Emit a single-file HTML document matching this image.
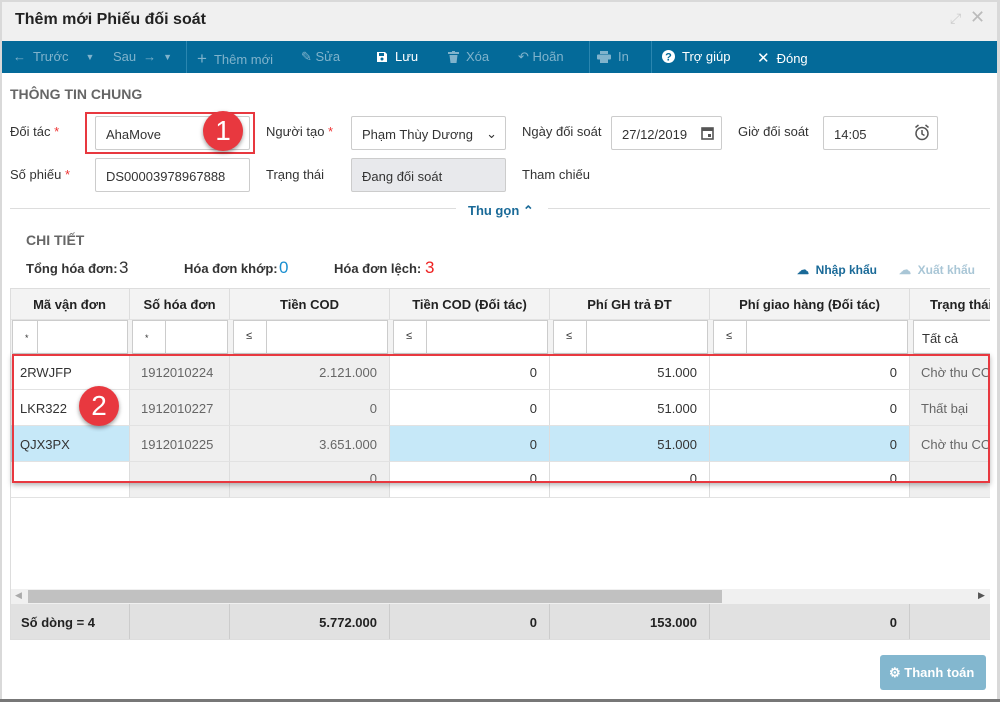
<!DOCTYPE html>
<html><head><meta charset="utf-8"><style>
*{box-sizing:border-box;margin:0;padding:0}
body{width:1000px;height:702px;overflow:hidden;background:#fff;font-family:"Liberation Sans",sans-serif;font-size:13px;color:#333;position:relative}
.a{position:absolute}
.tb{color:#fff;font-size:13px;top:49px;white-space:nowrap;display:flex;align-items:center;gap:7px}
.tb svg{display:block}
.dis{color:#80b3cc}
.lbl{font-size:13px;color:#333}
.inp{position:absolute;border:1px solid #ccc;border-radius:2px;background:#fff;height:34px;font-size:13px;padding:10px 0 0 10px}
.c{position:absolute;border-right:1px solid #ddd;border-bottom:1px solid #e2e2e2;font-size:13px;padding-top:11px;overflow:hidden;white-space:nowrap}
.r{text-align:right;padding-right:12px}
.g{background:#efefef}
.h{font-weight:bold;text-align:center;background:#f3f3f3;color:#222;padding-top:9px}
.sel{background:#c6e8f8}
.f{position:absolute;background:#fff;border:1px solid #ccc;height:34px}
.ft{position:absolute;background:#e1e1e1;border-right:1px solid #ccc;font-weight:bold;font-size:13px;padding-top:11px;color:#222}
.red{position:absolute;border:2px solid #e8383f}
.badge{position:absolute;width:40px;height:40px;border-radius:50%;background:#e8383f;color:#fff;font-size:28px;text-align:center;line-height:40px;box-shadow:0 2px 4px rgba(0,0,0,.4)}
</style></head><body>
<div class="a" style="left:0;top:0;width:1000px;height:702px;background:#d9d9d9"></div>
<div class="a" style="left:2px;top:2px;width:995px;height:697px;background:#fff"></div>
<div class="a" style="left:0;top:699px;width:1000px;height:3px;background:#777"></div>
<div class="a" style="left:2px;top:2px;width:995px;height:39px;background:#f0f0f0"></div>
<div class="a" style="left:15px;top:11px;font-size:16px;font-weight:bold;color:#222">Thêm mới Phiếu đối soát</div>
<div class="a" style="left:950px;top:10px;font-size:14px;color:#ccc">⤢</div>
<div class="a" style="left:970px;top:7px;font-size:18px;color:#bbb">✕</div>
<div class="a" style="left:2px;top:41px;width:995px;height:32px;background:#046a99"></div>
<div class="a" style="left:186px;top:41px;width:1px;height:32px;background:#2b86b0"></div>
<div class="a" style="left:589px;top:41px;width:1px;height:32px;background:#2b86b0"></div>
<div class="a" style="left:651px;top:41px;width:1px;height:32px;background:#2b86b0"></div>
<div class="a tb dis" style="left:13px">← <span>Trước</span><span style="margin-left:10px;font-size:9px">▼</span></div>
<div class="a tb dis" style="left:113px">Sau <span>→</span><span style="font-size:9px">▼</span></div>
<div class="a tb dis" style="left:197px"><span style="font-size:17px">+</span> Thêm mới</div>
<div class="a tb dis" style="left:301px">✎ Sửa</div>
<div class="a tb" style="left:376px"><svg width="12" height="12" viewBox="0 0 12 12"><path d="M1 1h8l2 2v8H1z" fill="#fff"/><rect x="3" y="2" width="5" height="3" fill="#046a99"/><circle cx="6" cy="8" r="1.5" fill="#046a99"/></svg> Lưu</div>
<div class="a tb dis" style="left:448px"><svg width="11" height="12" viewBox="0 0 11 12"><rect x="0" y="1" width="11" height="2" fill="#80b3cc"/><rect x="4" y="0" width="3" height="1.5" fill="#80b3cc"/><path d="M1.5 4h8l-1 8h-6z" fill="#80b3cc"/></svg> Xóa</div>
<div class="a tb dis" style="left:518px">↶ Hoãn</div>
<div class="a tb dis" style="left:597px"><svg width="14" height="12" viewBox="0 0 14 12"><rect x="3" y="0" width="8" height="3" fill="#80b3cc"/><rect x="0" y="3.5" width="14" height="5" rx="1" fill="#80b3cc"/><rect x="3" y="8" width="8" height="4" fill="#80b3cc"/></svg> In</div>
<div class="a tb" style="left:662px"><svg width="13" height="13" viewBox="0 0 13 13"><circle cx="6.5" cy="6.5" r="6.5" fill="#fff"/><text x="6.5" y="10.5" font-size="11" font-weight="bold" text-anchor="middle" fill="#046a99" font-family="Liberation Sans">?</text></svg> Trợ giúp</div>
<div class="a tb" style="left:757px"><span style="font-size:15px">✕</span> Đóng</div>

<div class="a" style="left:10px;top:86px;font-size:14px;font-weight:bold;color:#666">THÔNG TIN CHUNG</div>
<div class="a lbl" style="left:10px;top:124px">Đối tác <span style="color:#e33">*</span></div>
<div class="inp" style="left:95px;top:116px;width:155px">AhaMove</div>
<div class="a lbl" style="left:266px;top:124px">Người tạo <span style="color:#e33">*</span></div>
<div class="inp" style="left:351px;top:116px;width:155px">Phạm Thùy Dương<span style="position:absolute;right:8px;top:9px">⌄</span></div>
<div class="a lbl" style="left:522px;top:124px">Ngày đối soát</div>
<div class="inp" style="left:611px;top:116px;width:111px">27/12/2019<svg style="position:absolute;right:7px;top:9px" width="13" height="14" viewBox="0 0 13 14"><rect x="1" y="2" width="11" height="11" fill="none" stroke="#555" stroke-width="1.6"/><rect x="1" y="2" width="11" height="3" fill="#555"/><rect x="7" y="8" width="3" height="3" fill="#555"/></svg></div>
<div class="a lbl" style="left:738px;top:124px">Giờ đối soát</div>
<div class="inp" style="left:823px;top:116px;width:115px">14:05<svg style="position:absolute;right:7px;top:7px" width="16" height="17" viewBox="0 0 16 17"><circle cx="8" cy="9.5" r="6" fill="none" stroke="#555" stroke-width="1.5"/><path d="M8 6v4l2.5 1.5M1.5 3.5l3-2.5M14.5 3.5l-3-2.5" fill="none" stroke="#555" stroke-width="1.5"/></svg></div>
<div class="a lbl" style="left:10px;top:167px">Số phiếu <span style="color:#e33">*</span></div>
<div class="inp" style="left:95px;top:158px;width:155px">DS00003978967888</div>
<div class="a lbl" style="left:266px;top:167px">Trạng thái</div>
<div class="inp" style="left:351px;top:158px;width:155px;background:#e8e9ec">Đang đối soát</div>
<div class="a lbl" style="left:522px;top:167px">Tham chiếu</div>
<div class="a" style="left:10px;top:208px;width:446px;height:1px;background:#ddd"></div>
<div class="a" style="left:548px;top:208px;width:442px;height:1px;background:#ddd"></div>
<div class="a" style="left:468px;top:203px;font-weight:bold;color:#1a6a98;font-size:13px">Thu gọn ⌃</div>

<div class="a" style="left:26px;top:232px;font-size:14px;font-weight:bold;color:#666">CHI TIẾT</div>
<div class="a" style="left:26px;top:261px;font-weight:bold;color:#333">Tổng hóa đơn:</div>
<div class="a" style="left:118px;top:258px;font-size:17px;color:#333;left:119px">3</div>
<div class="a" style="left:184px;top:261px;font-weight:bold;color:#333">Hóa đơn khớp:</div>
<div class="a" style="left:279px;top:258px;font-size:17px;color:#1a8fd0">0</div>
<div class="a" style="left:334px;top:261px;font-weight:bold;color:#333">Hóa đơn lệch:</div>
<div class="a" style="left:425px;top:258px;font-size:17px;color:#e22">3</div>
<div class="a" style="left:797px;top:263px;font-weight:bold;color:#1a6a98;font-size:12px">☁&nbsp; Nhập khẩu</div>
<div class="a" style="left:899px;top:263px;font-weight:bold;color:#a9c6d6;font-size:12px">☁&nbsp; Xuất khẩu</div>

<div class="a" style="left:10px;top:288px;width:980px;height:352px;border:1px solid #ddd;border-right:none;overflow:hidden">
<div style="position:absolute;left:-11px;top:-289px;width:1010px;height:700px">
<div class="c h" style="left:10px;top:288px;width:120px;height:32px">Mã vận đơn</div>
<div class="c h" style="left:130px;top:288px;width:100px;height:32px">Số hóa đơn</div>
<div class="c h" style="left:230px;top:288px;width:160px;height:32px">Tiền COD</div>
<div class="c h" style="left:390px;top:288px;width:160px;height:32px">Tiền COD (Đối tác)</div>
<div class="c h" style="left:550px;top:288px;width:160px;height:32px">Phí GH trả ĐT</div>
<div class="c h" style="left:710px;top:288px;width:200px;height:32px">Phí giao hàng (Đối tác)</div>
<div class="c h" style="left:910px;top:288px;width:100px;height:32px;text-align:left;padding-left:20px">Trạng thái</div>
<div class="c" style="left:10px;top:320px;width:980px;height:34px;background:#f3f3f3;border:none"></div>
<div class="f" style="left:12px;top:320px;width:26px;font-size:9px;padding:12px 0 0 12px">*</div>
<div class="f" style="left:37px;top:320px;width:91px"></div>
<div class="f" style="left:132px;top:320px;width:34px;font-size:9px;padding:12px 0 0 12px">*</div>
<div class="f" style="left:165px;top:320px;width:63px"></div>
<div class="f" style="left:233px;top:320px;width:34px;font-size:11px;padding:9px 0 0 12px">≤</div>
<div class="f" style="left:266px;top:320px;width:122px"></div>
<div class="f" style="left:393px;top:320px;width:34px;font-size:11px;padding:9px 0 0 12px">≤</div>
<div class="f" style="left:426px;top:320px;width:122px"></div>
<div class="f" style="left:553px;top:320px;width:34px;font-size:11px;padding:9px 0 0 12px">≤</div>
<div class="f" style="left:586px;top:320px;width:122px"></div>
<div class="f" style="left:713px;top:320px;width:34px;font-size:11px;padding:9px 0 0 12px">≤</div>
<div class="f" style="left:746px;top:320px;width:162px"></div>
<div class="f" style="left:913px;top:320px;width:100px;padding:10px 0 0 8px;font-size:13px">Tất cả</div>
<div class="c" style="left:10px;top:354px;width:120px;height:36px;padding-left:10px">2RWJFP</div>
<div class="c g" style="left:130px;top:354px;width:100px;height:36px;padding-left:11px;color:#666">1912010224</div>
<div class="c g r" style="left:230px;top:354px;width:160px;height:36px;color:#666">2.121.000</div>
<div class="c r" style="left:390px;top:354px;width:160px;height:36px">0</div>
<div class="c r" style="left:550px;top:354px;width:160px;height:36px">51.000</div>
<div class="c r" style="left:710px;top:354px;width:200px;height:36px">0</div>
<div class="c g" style="left:910px;top:354px;width:100px;height:36px;padding-left:11px;color:#666">Chờ thu COD</div>
<div class="c" style="left:10px;top:390px;width:120px;height:36px;padding-left:10px">LKR322</div>
<div class="c g" style="left:130px;top:390px;width:100px;height:36px;padding-left:11px;color:#666">1912010227</div>
<div class="c g r" style="left:230px;top:390px;width:160px;height:36px;color:#666">0</div>
<div class="c r" style="left:390px;top:390px;width:160px;height:36px">0</div>
<div class="c r" style="left:550px;top:390px;width:160px;height:36px">51.000</div>
<div class="c r" style="left:710px;top:390px;width:200px;height:36px">0</div>
<div class="c g" style="left:910px;top:390px;width:100px;height:36px;padding-left:11px;color:#666">Thất bại</div>
<div class="c sel" style="left:10px;top:426px;width:120px;height:36px;padding-left:10px">QJX3PX</div>
<div class="c g" style="left:130px;top:426px;width:100px;height:36px;padding-left:11px;color:#666">1912010225</div>
<div class="c g r" style="left:230px;top:426px;width:160px;height:36px;color:#666">3.651.000</div>
<div class="c r sel" style="left:390px;top:426px;width:160px;height:36px">0</div>
<div class="c r sel" style="left:550px;top:426px;width:160px;height:36px">51.000</div>
<div class="c r sel" style="left:710px;top:426px;width:200px;height:36px">0</div>
<div class="c g" style="left:910px;top:426px;width:100px;height:36px;padding-left:11px;color:#666">Chờ thu COD</div>
<div class="c" style="left:10px;top:462px;width:120px;height:36px"></div>
<div class="c g" style="left:130px;top:462px;width:100px;height:36px"></div>
<div class="c g r" style="left:230px;top:462px;width:160px;height:36px;padding-top:9px;color:#666">0</div>
<div class="c r" style="left:390px;top:462px;width:160px;height:36px;padding-top:9px">0</div>
<div class="c r" style="left:550px;top:462px;width:160px;height:36px;padding-top:9px">0</div>
<div class="c r" style="left:710px;top:462px;width:200px;height:36px;padding-top:9px">0</div>
<div class="c g" style="left:910px;top:462px;width:100px;height:36px"></div>
<div class="a" style="left:10px;top:589px;width:980px;height:15px;background:#f0f0f0"></div>
<div class="a" style="left:28px;top:590px;width:694px;height:13px;background:#c1c1c1"></div>
<div class="a" style="left:15px;top:590px;font-size:9px;color:#aaa">◀</div>
<div class="a" style="left:978px;top:590px;font-size:9px;color:#555">▶</div>
<div class="ft" style="left:10px;top:604px;width:120px;height:36px;padding-left:11px">Số dòng = 4</div>
<div class="ft" style="left:130px;top:604px;width:100px;height:36px"></div>
<div class="ft r" style="left:230px;top:604px;width:160px;height:36px">5.772.000</div>
<div class="ft r" style="left:390px;top:604px;width:160px;height:36px">0</div>
<div class="ft r" style="left:550px;top:604px;width:160px;height:36px">153.000</div>
<div class="ft r" style="left:710px;top:604px;width:200px;height:36px">0</div>
<div class="ft" style="left:910px;top:604px;width:100px;height:36px"></div>
</div></div>

<div class="red" style="left:85px;top:112px;width:170px;height:42px"></div>
<div class="badge" style="left:203px;top:111px">1</div>
<div class="red" style="left:12px;top:354px;width:978px;height:129px;box-shadow:0 2px 5px rgba(0,0,0,.3)"></div>
<div class="badge" style="left:79px;top:386px">2</div>

<div class="a" style="left:880px;top:655px;width:106px;height:35px;background:#83b7cf;border-radius:3px;color:#fff;font-weight:bold;font-size:13px;padding:10px 0 0 9px"><span style="color:#fff">⚙</span> Thanh toán</div>
</body></html>
